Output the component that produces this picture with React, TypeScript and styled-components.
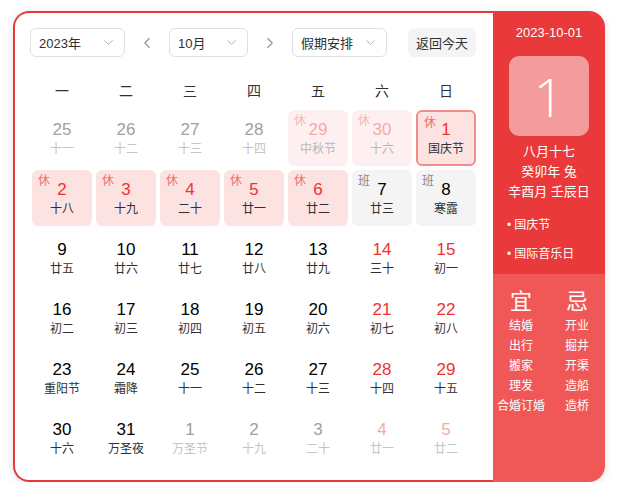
import React from "react";
import styled, { createGlobalStyle, css } from "styled-components";
import { ChevronDown, ChevronLeft, ChevronRight } from "lucide-react";

const GlobalStyle = createGlobalStyle`
  html, body {
    margin: 0;
    padding: 0;
    background: #fff;
    font-family: "Liberation Sans", "Noto Sans CJK SC", sans-serif;
  }
`;

type Kind = "prev" | "cur" | "next";
type Day = {
  n: number;
  lunar: string;
  kind?: Kind;
  rest?: boolean;
  work?: boolean;
  weekend?: boolean;
  selected?: boolean;
};

const weeks: Day[][] = [
  [
    { n: 25, lunar: "十一", kind: "prev" },
    { n: 26, lunar: "十二", kind: "prev" },
    { n: 27, lunar: "十三", kind: "prev" },
    { n: 28, lunar: "十四", kind: "prev" },
    { n: 29, lunar: "中秋节", kind: "prev", rest: true },
    { n: 30, lunar: "十六", kind: "prev", rest: true },
    { n: 1, lunar: "国庆节", rest: true, selected: true },
  ],
  [
    { n: 2, lunar: "十八", rest: true },
    { n: 3, lunar: "十九", rest: true },
    { n: 4, lunar: "二十", rest: true },
    { n: 5, lunar: "廿一", rest: true },
    { n: 6, lunar: "廿二", rest: true },
    { n: 7, lunar: "廿三", work: true },
    { n: 8, lunar: "寒露", work: true },
  ],
  [
    { n: 9, lunar: "廿五" },
    { n: 10, lunar: "廿六" },
    { n: 11, lunar: "廿七" },
    { n: 12, lunar: "廿八" },
    { n: 13, lunar: "廿九" },
    { n: 14, lunar: "三十", weekend: true },
    { n: 15, lunar: "初一", weekend: true },
  ],
  [
    { n: 16, lunar: "初二" },
    { n: 17, lunar: "初三" },
    { n: 18, lunar: "初四" },
    { n: 19, lunar: "初五" },
    { n: 20, lunar: "初六" },
    { n: 21, lunar: "初七", weekend: true },
    { n: 22, lunar: "初八", weekend: true },
  ],
  [
    { n: 23, lunar: "重阳节" },
    { n: 24, lunar: "霜降" },
    { n: 25, lunar: "十一" },
    { n: 26, lunar: "十二" },
    { n: 27, lunar: "十三" },
    { n: 28, lunar: "十四", weekend: true },
    { n: 29, lunar: "十五", weekend: true },
  ],
  [
    { n: 30, lunar: "十六" },
    { n: 31, lunar: "万圣夜" },
    { n: 1, lunar: "万圣节", kind: "next" },
    { n: 2, lunar: "十九", kind: "next" },
    { n: 3, lunar: "二十", kind: "next" },
    { n: 4, lunar: "廿一", kind: "next", weekend: true },
    { n: 5, lunar: "廿二", kind: "next", weekend: true },
  ],
];

const weekNames = ["一", "二", "三", "四", "五", "六", "日"];
const goodList = ["结婚", "出行", "搬家", "理发", "合婚订婚"];
const badList = ["开业", "掘井", "开渠", "造船", "造桥"];

const Page = styled.div`
  padding: 11px 0 0 13px;
`;

const Wrapper = styled.div`
  display: flex;
  width: 592px;
  height: 471px;
  border-radius: 16px;
  box-shadow: 0 2px 8px rgba(0, 0, 0, 0.12);
`;

const Main = styled.div`
  width: 480px;
  box-sizing: border-box;
  border: 2px solid #e8383a;
  border-right: none;
  border-radius: 16px 0 0 16px;
  padding: 15px 0 0 15px;
  background: #fff;
`;

const Toolbar = styled.div`
  display: flex;
  align-items: center;
  height: 29px;
`;

const Select = styled.div<{ $w: number }>`
  width: ${(p) => p.$w}px;
  height: 29px;
  box-sizing: border-box;
  border: 1px solid #dcdfe6;
  border-radius: 6px;
  display: flex;
  align-items: center;
  justify-content: space-between;
  padding: 0 8px;
  font-size: 13px;
  color: #303133;
  svg {
    color: #a8abb2;
  }
`;

const Arrow = styled.div`
  width: 44px;
  display: flex;
  justify-content: center;
  color: #909399;
`;

const TodayButton = styled.div`
  margin-left: 21px;
  height: 29px;
  padding: 0 8px;
  display: flex;
  align-items: center;
  background: #f4f4f5;
  border-radius: 6px;
  font-size: 13px;
  color: #303133;
`;

const Grid = styled.div`
  display: grid;
  grid-template-columns: repeat(7, 60px);
  column-gap: 4px;
  row-gap: 4px;
  margin-left: 2px;
`;

const WeekHead = styled(Grid)`
  margin-top: 23px;
  height: 22px;
  margin-bottom: 8px;
`;

const WeekName = styled.div`
  text-align: center;
  font-size: 14px;
  line-height: 22px;
  color: #303133;
`;

const Cell = styled.div<{ $rest?: boolean; $work?: boolean; $faded?: boolean; $sel?: boolean }>`
  position: relative;
  height: 56px;
  box-sizing: border-box;
  border-radius: 6px;
  padding-top: 10px;
  text-align: center;
  ${(p) =>
    p.$rest &&
    css`
      background: ${p.$faded ? "#fef0f0" : "#fde2e2"};
    `}
  ${(p) =>
    p.$work &&
    css`
      background: #f4f4f5;
    `}
  ${(p) =>
    p.$sel &&
    css`
      border: 2px solid #f28b8b;
      padding-top: 8px;
    `}
`;

const Num = styled.div<{ $color: string }>`
  font-size: 17px;
  line-height: 20px;
  color: ${(p) => p.$color};
`;

const Lunar = styled.div<{ $color: string }>`
  margin-top: 2px;
  font-size: 12px;
  line-height: 14px;
  color: ${(p) => p.$color};
`;

const Tag = styled.span<{ $color: string }>`
  position: absolute;
  left: 6px;
  top: 4px;
  font-size: 12px;
  line-height: 14px;
  color: ${(p) => p.$color};
`;

const Side = styled.div`
  width: 112px;
  display: flex;
  flex-direction: column;
  border-radius: 0 16px 16px 0;
  overflow: hidden;
  color: #fff;
`;

const SideTop = styled.div`
  height: 263px;
  background: #e9393a;
  display: flex;
  flex-direction: column;
  align-items: center;
  padding-top: 12px;
  box-sizing: border-box;
`;

const DateText = styled.div`
  font-size: 13px;
  line-height: 20px;
`;

const BigDay = styled.div`
  margin-top: 13px;
  width: 80px;
  height: 80px;
  border-radius: 10px;
  background: rgba(255, 255, 255, 0.5);
  display: flex;
  align-items: center;
  justify-content: center;
  font-size: 54px;
  font-weight: 300;
  font-family: "Open Sans", "Liberation Sans", sans-serif;
`;

const LunarInfo = styled.div`
  margin-top: 6px;
  font-size: 13px;
  line-height: 20px;
  text-align: center;
`;

const Festivals = styled.ul`
  list-style: none;
  margin: 13px 0 0;
  padding: 0 0 0 14px;
  align-self: stretch;
  display: flex;
  flex-direction: column;
  gap: 9px;
`;

const Festival = styled.li`
  font-size: 12px;
  line-height: 20px;
  &::before {
    content: "•";
    margin-right: 3px;
  }
`;

const SideBottom = styled.div`
  flex: 1;
  background: #f05858;
  display: grid;
  grid-template-columns: 56px 56px;
  padding-top: 14px;
`;

const Column = styled.div`
  display: flex;
  flex-direction: column;
  align-items: center;
`;

const BigChar = styled.div`
  font-size: 22px;
  line-height: 28px;
`;

const Item = styled.div`
  font-size: 12px;
  line-height: 20px;
  white-space: nowrap;
`;

function colors(d: Day) {
  const kind = d.kind ?? "cur";
  if (kind === "prev") {
    if (d.rest) return { num: "#f8a9a9", lunar: "#b8b8b8", tag: "#f8b4b4" };
    return { num: "#a0a0a0", lunar: "#c4c4c4", tag: "" };
  }
  if (kind === "next") {
    if (d.weekend) return { num: "#f8a9a9", lunar: "#c4c4c4", tag: "" };
    return { num: "#a0a0a0", lunar: "#c4c4c4", tag: "" };
  }
  if (d.rest) return { num: "#f23030", lunar: "#303133", tag: "#f56c6c" };
  if (d.work) return { num: "#000", lunar: "#303133", tag: "#888" };
  if (d.weekend) return { num: "#f23030", lunar: "#303133", tag: "" };
  return { num: "#000", lunar: "#303133", tag: "" };
}

export default function App() {
  return (
    <Page>
      <GlobalStyle />
      <Wrapper>
        <Main>
          <Toolbar>
            <Select $w={95}>
              2023年
              <ChevronDown size={15} strokeWidth={1.5} />
            </Select>
            <Arrow>
              <ChevronLeft size={18} strokeWidth={1.5} />
            </Arrow>
            <Select $w={79}>
              10月
              <ChevronDown size={15} strokeWidth={1.5} />
            </Select>
            <Arrow>
              <ChevronRight size={18} strokeWidth={1.5} />
            </Arrow>
            <Select $w={95}>
              假期安排
              <ChevronDown size={15} strokeWidth={1.5} />
            </Select>
            <TodayButton>返回今天</TodayButton>
          </Toolbar>
          <WeekHead>
            {weekNames.map((w) => (
              <WeekName key={w}>{w}</WeekName>
            ))}
          </WeekHead>
          <Grid>
            {weeks.flat().map((d, i) => {
              const c = colors(d);
              return (
                <Cell
                  key={i}
                  $rest={d.rest}
                  $work={d.work}
                  $faded={d.kind === "prev"}
                  $sel={d.selected}
                >
                  {d.rest && <Tag $color={c.tag}>休</Tag>}
                  {d.work && <Tag $color={c.tag}>班</Tag>}
                  <Num $color={c.num}>{d.n}</Num>
                  <Lunar $color={c.lunar}>{d.lunar}</Lunar>
                </Cell>
              );
            })}
          </Grid>
        </Main>
        <Side>
          <SideTop>
            <DateText>2023-10-01</DateText>
            <BigDay>1</BigDay>
            <LunarInfo>
              八月十七
              <br />
              癸卯年 兔
              <br />
              辛酉月 壬辰日
            </LunarInfo>
            <Festivals>
              <Festival>国庆节</Festival>
              <Festival>国际音乐日</Festival>
            </Festivals>
          </SideTop>
          <SideBottom>
            <Column>
              <BigChar>宜</BigChar>
              {goodList.map((g) => (
                <Item key={g}>{g}</Item>
              ))}
            </Column>
            <Column>
              <BigChar>忌</BigChar>
              {badList.map((g) => (
                <Item key={g}>{g}</Item>
              ))}
            </Column>
          </SideBottom>
        </Side>
      </Wrapper>
    </Page>
  );
}
